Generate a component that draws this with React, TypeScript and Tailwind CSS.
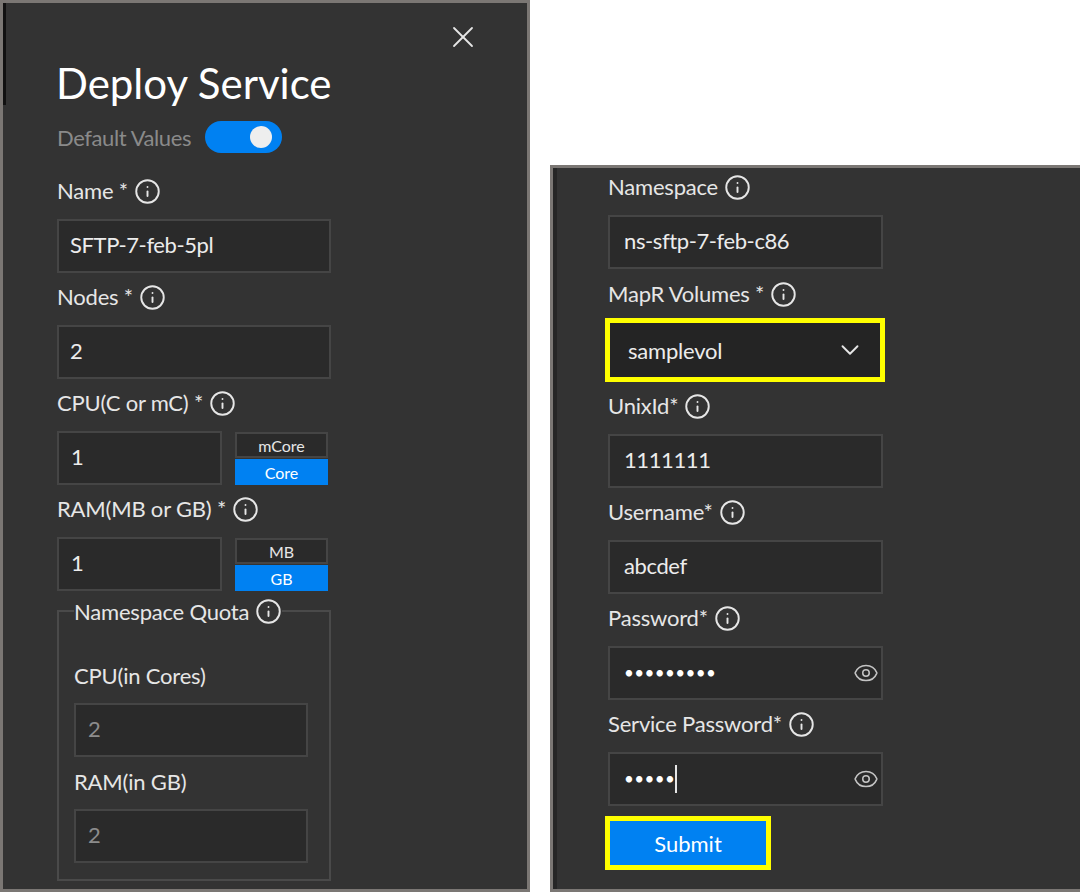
import { Eye, ChevronDown, Info, X } from 'lucide-react';

const Label = ({ text }: { text: string }) => (
  <div className="flex h-[26px] items-center gap-[6px] text-[22px] leading-[26px] tracking-[-0.2px] text-[#e6e6e6]">
    <span>{text}</span>
    <Info className="h-[27px] w-[27px] text-[#e6e6e6]" strokeWidth={1.7} />
  </div>
);

const Box = ({ value, className = 'pl-[12px] text-[#ececec]' }: { value: string; className?: string }) => (
  <div className={`flex h-[54px] items-center border-2 border-[#454545] bg-[#2a2a2a] pb-[3px] text-[22px] tracking-[-0.4px] ${className}`}>
    {value}
  </div>
);

const UnitToggle = ({ top, bottom }: { top: string; bottom: string }) => (
  <div className="flex w-[93px] flex-col gap-[1px] pt-[1px] text-center text-[16px]">
    <div className="h-[26px] border-2 border-[#454545] bg-[#2a2a2a] leading-[24px] text-[#e6e6e6]">{top}</div>
    <div className="h-[26px] bg-[#0081f2] leading-[27px] text-white">{bottom}</div>
  </div>
);

const Field = ({ label, value, inset = 'pl-[11px]' }: { label: string; value: string; inset?: string }) => (
  <div className="mb-[11px] flex flex-col gap-[15px]">
    <Label text={label} />
    <Box value={value} className={`${inset} text-[#ececec]`} />
  </div>
);

const UnitField = ({ label, top, bottom }: { label: string; top: string; bottom: string }) => (
  <div className="mb-[11px] flex flex-col gap-[15px]">
    <Label text={label} />
    <div className="flex gap-[13px]">
      <Box value="1" className="w-[165px] pl-[12px] text-[#ececec]" />
      <UnitToggle top={top} bottom={bottom} />
    </div>
  </div>
);

const QuotaField = ({ label }: { label: string }) => (
  <div className="mb-[12px] flex w-[234px] flex-col gap-[14px]">
    <div className="h-[26px] text-[22px] leading-[26px] tracking-[-0.2px] text-[#e6e6e6]">{label}</div>
    <Box value="2" className="pl-[12px] text-[#8c8c8c]" />
  </div>
);

const PasswordField = ({ label, dots, caret }: { label: string; dots: string; caret?: boolean }) => (
  <div className="flex flex-col gap-[15px]">
    <Label text={label} />
    <div className="flex h-[54px] items-center justify-between border-2 border-[#454545] bg-[#2a2a2a] pl-[14px] pr-[2px]">
      <div className="flex items-center">
        <span className="text-[17px] tracking-[0.4px] text-white">{dots}</span>
        {caret && <span className="h-[28px] w-[2px] bg-[#e6e6e6]" />}
      </div>
      <Eye className="h-[26px] w-[26px] text-[#c4c4c4]" strokeWidth={1.4} />
    </div>
  </div>
);

export default function App() {
  return (
    <div className="flex h-[893px] w-[1080px] items-start gap-[20px] overflow-hidden bg-white font-['Lato',sans-serif]">
      {/* Deploy dialog, first half */}
      <div className="relative h-[892px] w-[530px] shrink-0 border-[3px] border-[#7b7774] bg-[#333333]">
        <div className="absolute left-0 top-0 h-[102px] w-[3px] bg-[#111111]" />
        <div className="flex h-full flex-col pl-[54px]">
          <div className="flex justify-end pr-[46px] pt-[16px]">
            <X className="h-[36px] w-[36px] text-[#e6e6e6]" strokeWidth={1.2} />
          </div>
          <h1 className="-ml-[1px] mt-[3px] h-[50px] text-[42px] leading-[50px] text-white">Deploy Service</h1>
          <div className="mt-[13px] flex h-[32px] items-center gap-[14px]">
            <span className="text-[22px] tracking-[-0.4px] text-[#8a8a8a]">Default Values</span>
            <div className="flex h-[32px] w-[77px] items-center justify-end rounded-full bg-[#0081f2] pr-[10px]">
              <div className="h-[22px] w-[22px] rounded-full bg-[#eeeeee]" />
            </div>
          </div>
          <div className="mt-[25px] w-[274px]">
            <Field label="Name *" value="SFTP-7-feb-5pl" />
            <Field label="Nodes *" value="2" />
            <UnitField label="CPU(C or mC) *" top="mCore" bottom="Core" />
            <UnitField label="RAM(MB or GB) *" top="MB" bottom="GB" />
            <fieldset className="-mt-[4px] h-[283px] border-2 border-[#4a4a4a] px-[15px]">
              <legend className="flex h-[26px] items-center gap-[6px] text-[22px] tracking-[-0.2px] text-[#e6e6e6]">
                <span>Namespace Quota</span>
                <Info className="h-[27px] w-[27px]" strokeWidth={1.7} />
              </legend>
              <div className="pt-[39px]">
                <QuotaField label="CPU(in Cores)" />
                <QuotaField label="RAM(in GB)" />
              </div>
            </fieldset>
          </div>
        </div>
      </div>

      {/* Deploy dialog, second half */}
      <div className="mt-[165px] h-[727px] w-[530px] shrink-0 border-[3px] border-r-0 border-[#7b7774] bg-[#333333]">
        <div className="h-full border-l-[4px] border-[#262626] pl-[51px] pt-[6px]">
          <div className="w-[275px]">
            <Field label="Namespace" value="ns-sftp-7-feb-c86" inset="pl-[14px]" />
            <div className="mb-[11px] flex flex-col gap-[11px] pt-[1px]">
              <Label text="MapR Volumes *" />
              <div className="-ml-[3px] flex h-[64px] w-[280px] items-center justify-between border-[5px] border-[#ffff00] bg-[#242424] pl-[18px] pr-[15px] text-[22px] tracking-[-0.2px] text-[#ececec]">
                samplevol
                <ChevronDown className="h-[30px] w-[30px] text-[#e6e6e6]" strokeWidth={1.5} />
              </div>
            </div>
            <Field label="UnixId*" value="1111111" inset="pl-[14px]" />
            <Field label="Username*" value="abcdef" inset="pl-[14px]" />
            <div className="flex flex-col gap-[11px]">
              <PasswordField label="Password*" dots="•••••••••" />
              <PasswordField label="Service Password*" dots="•••••" caret />
            </div>
            <button className="-ml-[3px] mt-[10px] h-[54px] w-[166px] border-[5px] border-[#ffff00] bg-[#0081f2] text-[22px] text-white">
              Submit
            </button>
          </div>
        </div>
      </div>
    </div>
  );
}
